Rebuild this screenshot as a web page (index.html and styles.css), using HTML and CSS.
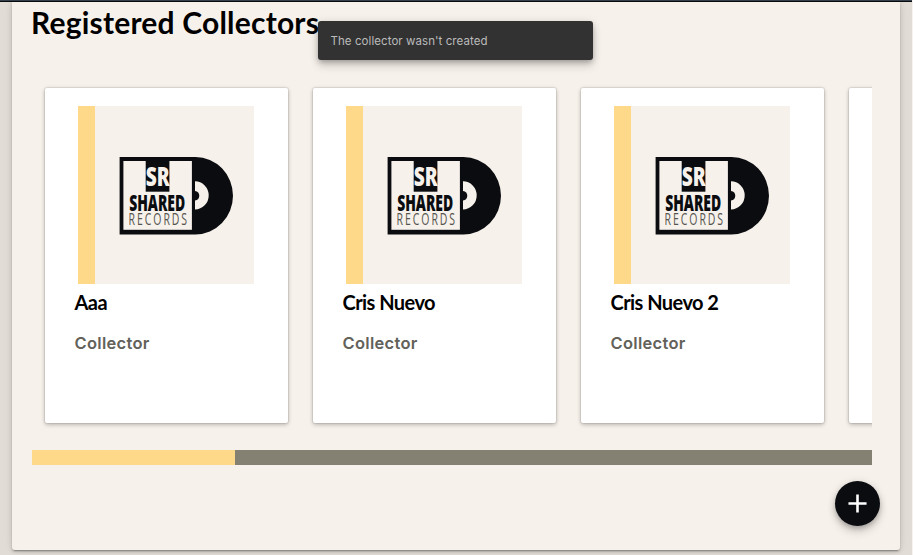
FILE: index.html
```
<!DOCTYPE html>
<html lang="en">
<head>
<meta charset="utf-8">
<title>Registered Collectors</title>
<link rel="stylesheet" href="styles.css">
</head>
<body>
<svg class="defs" aria-hidden="true">
  <symbol id="cover" viewBox="0 0 176 178">
    <rect width="176" height="178" fill="#f7f1eb"/>
    <rect width="17" height="178" fill="#ffd98a"/>
    <path d="M41.6 51H117.5A37.5 38.7 0 0 1 117.5 128.4H41.6Z" fill="#0a0c10"/>
    <rect x="45.4" y="55" width="68.5" height="68.8" fill="#f7f1eb"/>
    <path d="M117 75.3A13.7 14.1 0 0 1 117 103.5V94.5A5 4.8 0 0 0 117 85Z" fill="#f7f1eb"/>
    <rect x="67.7" y="54" width="23.7" height="31.7" fill="#0a0c10"/>
    <text x="67.7" y="80.2" font-size="26" textLength="24" lengthAdjust="spacingAndGlyphs" class="mark light">SR</text>
    <text x="51.2" y="104.5" font-size="22" textLength="56" lengthAdjust="spacingAndGlyphs" class="mark bold">SHARED</text>
    <text transform="translate(50.6 118.6) scale(.68 1)" font-size="15.4" textLength="86" lengthAdjust="spacing" class="mark thin">RECORDS</text>
  </symbol>
</svg>
<div class="topbar"></div>
<main class="panel">
  <h1 class="title"><span>Registered Collectors</span></h1>
  <section class="carousel">
    <article class="card">
      <svg class="cover"><use href="#cover"/></svg>
      <h2 class="name">Aaa</h2>
      <p class="role">Collector</p>
    </article>
    <article class="card">
      <svg class="cover"><use href="#cover"/></svg>
      <h2 class="name">Cris Nuevo</h2>
      <p class="role">Collector</p>
    </article>
    <article class="card">
      <svg class="cover"><use href="#cover"/></svg>
      <h2 class="name">Cris Nuevo 2</h2>
      <p class="role">Collector</p>
    </article>
    <article class="card"></article>
  </section>
  <div class="track"><div class="thumb"></div></div>
</main>
<div class="toast" role="status">The collector wasn't created</div>
<button class="fab" aria-label="Add collector">
  <svg viewBox="0 0 24 24" width="31" height="31"><path d="M19 13h-6v6h-2v-6H5v-2h6V5h2v6h6z" fill="#fff"/></svg>
</button>
</body>
</html>
```
FILE: styles.css
```
* { box-sizing: border-box; }
body {
  margin: 0;
  height: 555px;
  overflow: hidden;
  background: #e1dcd6;
  border-right: 1px solid #f6f3f0;
  font-family: "Liberation Sans", sans-serif;
}
.defs { display: none; }
.topbar {
  position: relative;
  z-index: 1;
  height: 2px;
  background: linear-gradient(#34404c 50%, #080a0e 50%);
}
.panel {
  width: 888px;
  height: 548px;
  margin-left: 12px;
  padding: 1px 28px 0 20px;
  background: #f7f1eb;
  border-radius: 0 0 3px 3px;
  box-shadow: 0 3px 1px -2px rgba(0,0,0,.2), 0 2px 2px rgba(0,0,0,.14), 0 1px 5px rgba(0,0,0,.12), 0 0 12px rgba(0,0,0,.06);
}
.title {
  margin: 0 0 0 -1px;
  height: 39px;
  font: 700 30px/38px Lato, sans-serif;
  letter-spacing: .2px;
  color: #000;
  white-space: nowrap;
}
.carousel {
  display: flex;
  gap: 25px;
  height: 408px;
  padding: 46px 0 0 13px;
  overflow: hidden;
}
.card {
  flex: 0 0 243px;
  height: 335px;
  padding: 18px 29px;
  background: #fff;
  border-radius: 2px;
  box-shadow: 0 0 0 1px rgba(0,0,0,.06), 0 2px 4px rgba(0,0,0,.2), 0 0 4px rgba(0,0,0,.1);
}
.cover { display: block; width: 176px; height: 178px; margin-left: 4px; }
.mark { font-family: "Open Sans", sans-serif; }
.light { font-weight: 800; fill: #f7f1eb; }
.bold { font-weight: 800; fill: #0a0c10; }
.thin { font-weight: 400; fill: #55554f; }
.name {
  margin: 5px 0 0 .5px;
  font: 700 20px/26px Lato, sans-serif;
  letter-spacing: -.55px;
  color: #000;
  white-space: nowrap;
}
.role {
  margin: 16px 0 0 .5px;
  font: 600 16.5px/24px Inter, sans-serif;
  letter-spacing: .3px;
  color: #62615a;
}
.track { height: 15px; background: #848173; }
.thumb { width: 203px; height: 15px; background: #ffd98a; }
.toast {
  position: absolute;
  left: 318px;
  top: 21px;
  width: 275px;
  height: 39px;
  padding-left: 12.5px;
  font: 400 11.5px/40px Inter, sans-serif;
  letter-spacing: .07px;
  color: #bbb;
  background: #323232;
  border-radius: 3px;
  box-shadow: 0 3px 5px -1px rgba(0,0,0,.2), 0 6px 10px rgba(0,0,0,.14), 0 1px 8px rgba(0,0,0,.12);
}
.fab {
  position: absolute;
  left: 835px;
  top: 481px;
  display: grid;
  place-items: center;
  width: 45px;
  height: 45px;
  padding: 0;
  border: 0;
  border-radius: 50%;
  background: #0a0c10;
  box-shadow: 0 3px 5px -1px rgba(0,0,0,.2), 0 6px 10px rgba(0,0,0,.14), 0 1px 8px rgba(0,0,0,.12);
}
```
